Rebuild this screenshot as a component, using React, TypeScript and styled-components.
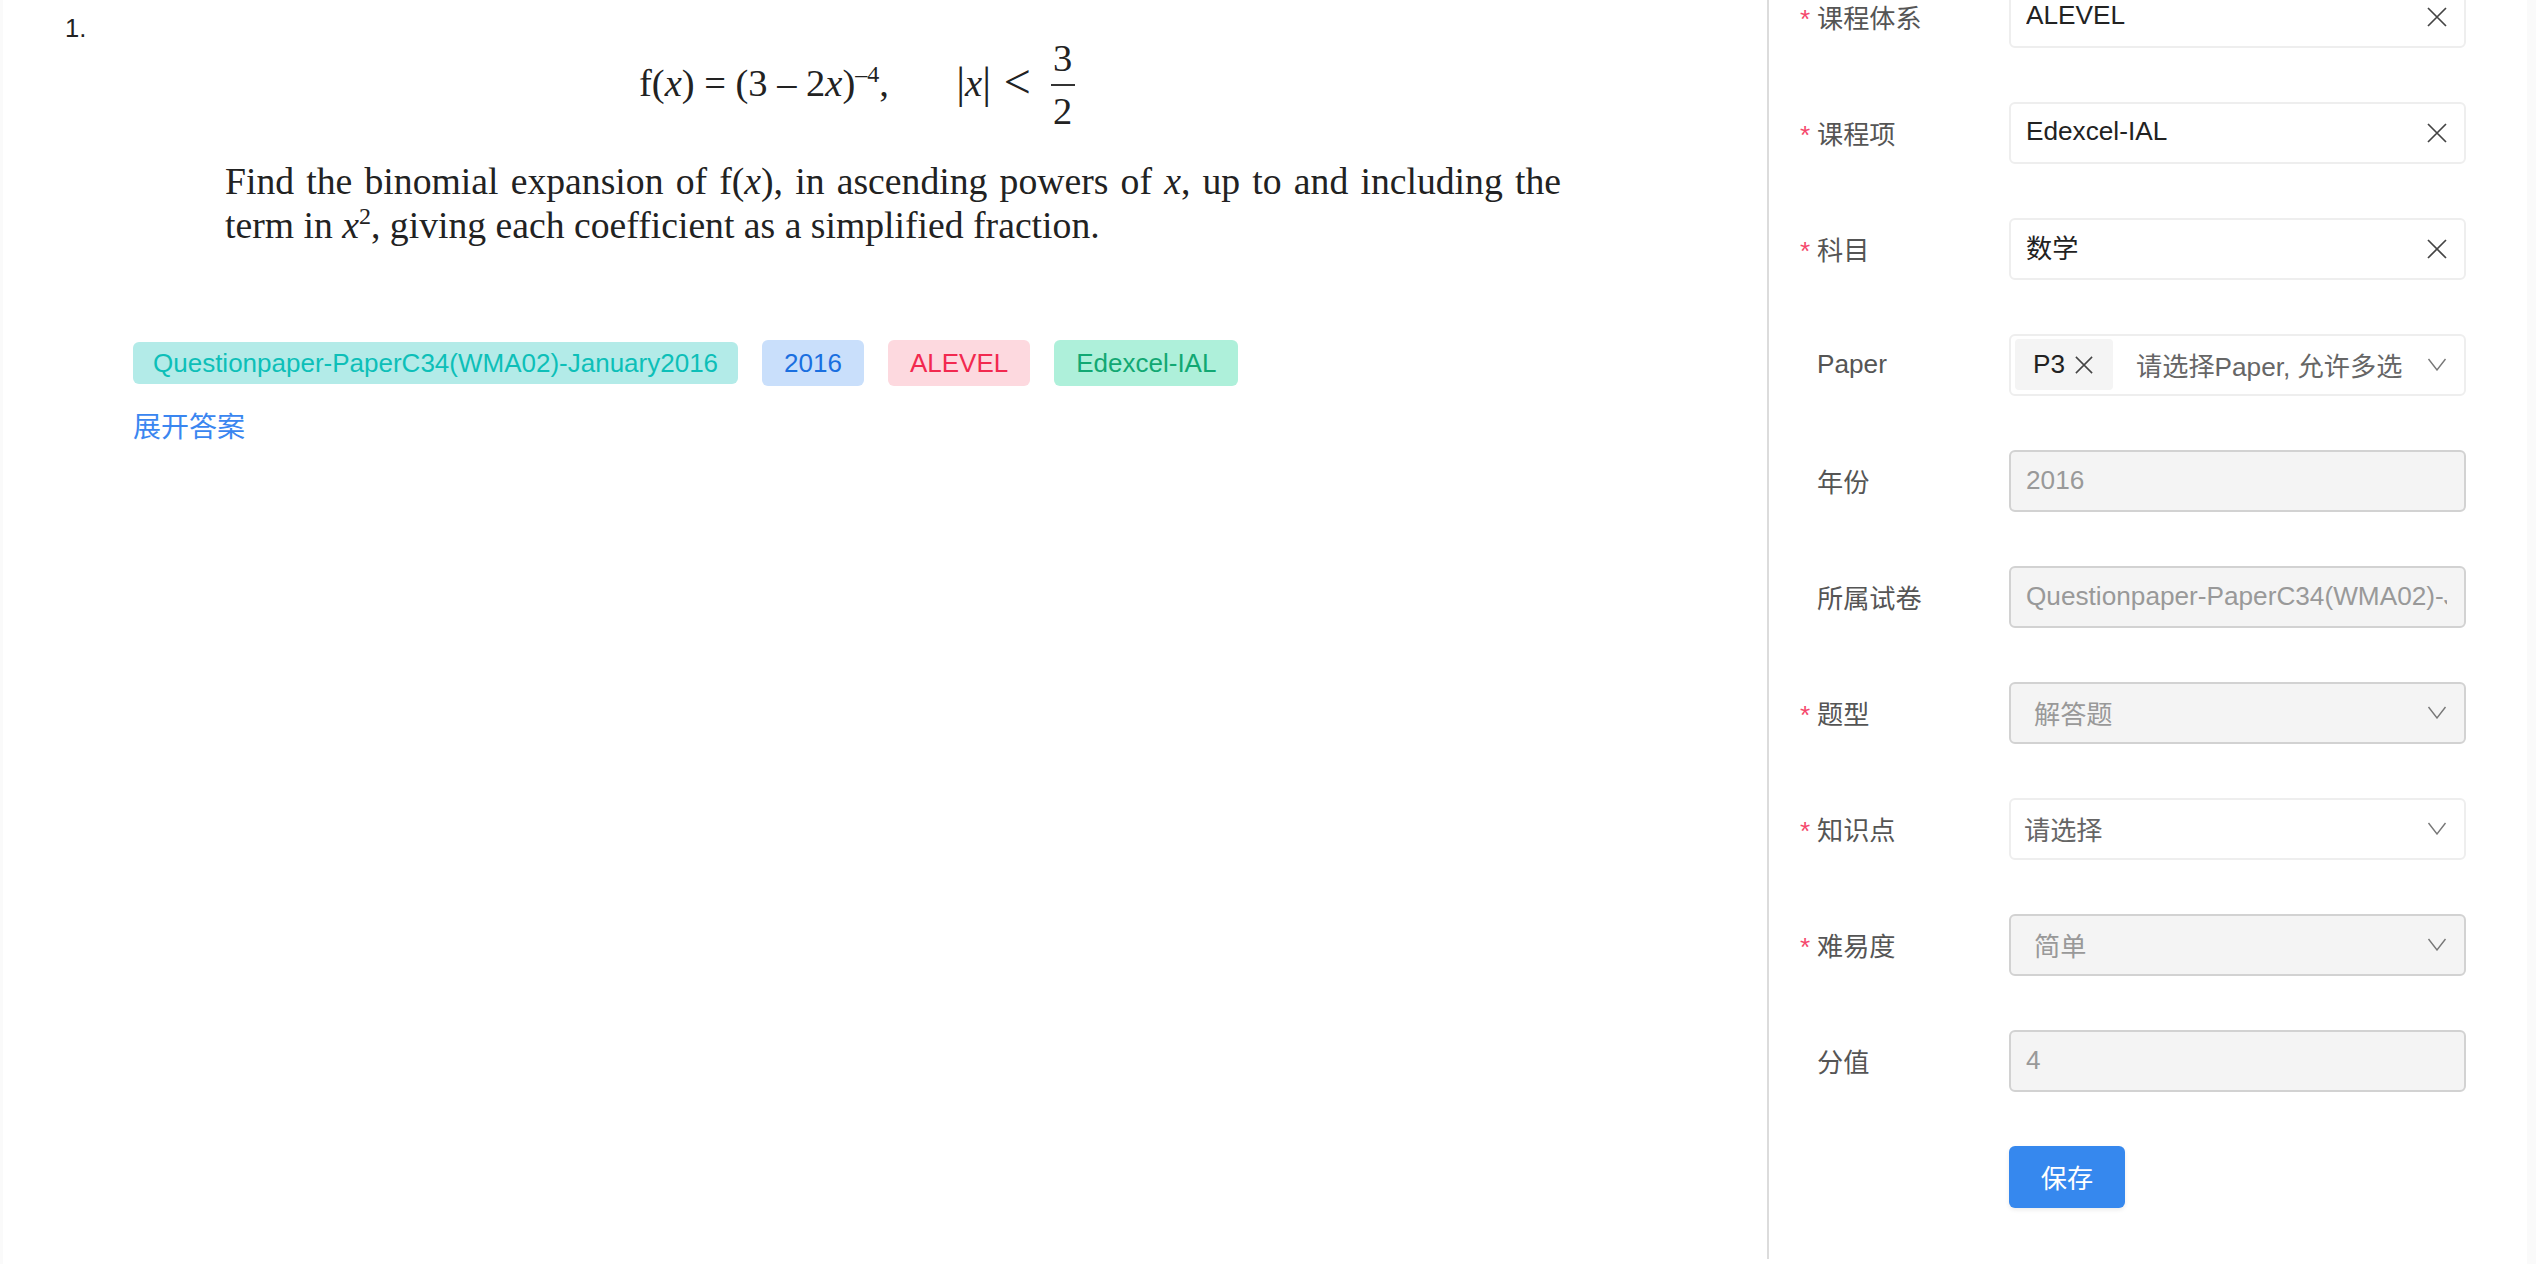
import styled, { createGlobalStyle } from 'styled-components'

const GlobalStyle = createGlobalStyle`
  html, body {
    margin: 0;
    padding: 0;
    height: 100%;
    overflow: hidden;
    background: #fff;
  }
  body {
    font-family: "Liberation Sans", "Noto Sans CJK SC", sans-serif;
    font-size: 26.2px;
    color: #333;
  }
`

const Page = styled.div`
  display: flex;
  height: 1264px;
  overflow: hidden;
  border-left: 3px solid #fafafa;
  box-sizing: border-box;
`

const Main = styled.main`
  width: 1766px;
  flex: none;
  box-sizing: border-box;
  padding: 13px 0 0 61px;
  border-right: 2px solid #dcdcdc;
  margin-bottom: 5px;
`

const Number = styled.div`
  color: #222;
  font-size: 25.6px;
  line-height: 30px;
  margin-left: 1px;
`

const Formula = styled.div`
  display: flex;
  align-items: center;
  margin: -5px 0 0 575px;
  height: 90px;
  font-family: "Liberation Serif", "Times New Roman", serif;
  font-size: 38.5px;
  color: #222;
  white-space: pre;
`

const Sup = styled.sup`
  font-size: 24px;
  line-height: 0;
`

const MathSign = styled.span<{ $size: number }>`
  font-size: ${p => p.$size}px;
  line-height: 0;
  vertical-align: -2px;
`

const LessSign = styled(MathSign)`
  margin-left: 3px;
`

const Fraction = styled.span`
  display: inline-flex;
  flex-direction: column;
  align-items: center;
  gap: 3px;
  margin-left: 20px;
  padding-top: 3px;
  line-height: 45px;
`

const FractionBar = styled.span`
  width: 24px;
  height: 2px;
  background: #333;
`

const Question = styled.p`
  width: 1336px;
  margin: 32px 0 0 161px;
  font-family: "Liberation Serif", "Times New Roman", serif;
  font-size: 37.7px;
  line-height: 43.5px;
  color: #222;
  text-align: justify;
`

const TagRow = styled.div`
  display: flex;
  align-items: center;
  gap: 24px;
  margin: 93px 0 0 69px;
`

const TAG_COLORS = {
  teal: { bg: '#b3ebe8', fg: '#0dbfb8' },
  blue: { bg: '#c9dffb', fg: '#1a6fe0' },
  red: { bg: '#fdd9df', fg: '#f2294f' },
  green: { bg: '#aef0da', fg: '#12a873' },
}

const Tag = styled.span<{ $tone: keyof typeof TAG_COLORS; $short?: boolean }>`
  display: block;
  height: ${p => (p.$short ? 42 : 46)}px;
  line-height: ${p => (p.$short ? 42 : 46)}px;
  padding: 0 ${p => (p.$short ? 20 : 22)}px;
  border-radius: 6px;
  font-size: 26px;
  background: ${p => TAG_COLORS[p.$tone].bg};
  color: ${p => TAG_COLORS[p.$tone].fg};
`

const ExpandLink = styled.a`
  display: block;
  margin: 23px 0 0 69px;
  font-size: 28px;
  line-height: 38px;
  color: #3a86f0;
`

const Side = styled.aside`
  flex: 1;
  display: flex;
  flex-direction: column;
  gap: 53px;
  margin-top: -15px;
  padding-left: 31px;
  background: linear-gradient(to left, #fafafa 9px, #fff 9px);
`

const Row = styled.div`
  display: flex;
  align-items: center;
  height: 63px;
`

const Label = styled.label<{ $required?: boolean }>`
  position: relative;
  width: 209px;
  padding-left: 17px;
  box-sizing: border-box;
  flex: none;
  color: #555;

  &::before {
    content: ${p => (p.$required ? '"*"' : 'none')};
    position: absolute;
    left: 0;
    top: 6px;
    color: #f5486c;
  }
`

const Field = styled.div<{ $disabled?: boolean }>`
  width: 457px;
  height: 62px;
  box-sizing: border-box;
  display: flex;
  align-items: center;
  gap: 12px;
  padding: 0 17px 0 15px;
  border: 2px solid ${p => (p.$disabled ? '#d2d2d2' : '#eeeeee')};
  border-radius: 6px;
  background: ${p => (p.$disabled ? '#f4f4f4' : '#fff')};
  color: ${p => (p.$disabled ? '#999' : '#222')};
`

const FieldText = styled.span<{ $shift?: number; $muted?: boolean; $raised?: boolean; $clip?: number }>`
  flex: 1;
  min-width: 0;
  overflow: hidden;
  white-space: nowrap;
  margin-left: ${p => p.$shift ?? 0}px;
  margin-right: ${p => p.$clip ?? 0}px;
  padding-bottom: ${p => (p.$raised ? 3 : 0)}px;
  color: ${p => (p.$muted ? '#666' : 'inherit')};
`

const Chip = styled.span`
  flex: none;
  display: flex;
  align-items: center;
  gap: 10px;
  height: 51px;
  margin: 0 11px 0 -11px;
  padding: 0 20px 0 18px;
  border-radius: 4px;
  background: #f4f4f4;
  color: #222;
`

const CrossSvg = styled.svg`
  flex: none;
  fill: none;
  stroke: #444;
  stroke-width: 1.7;
`

const ChevronSvg = styled.svg`
  flex: none;
  fill: none;
  stroke: #777;
  stroke-width: 1.4;
`

const CloseIcon = ({ size = 20 }: { size?: number }) => (
  <CrossSvg width={size} height={size} viewBox="0 0 20 20">
    <path d="M1 1 19 19M19 1 1 19" />
  </CrossSvg>
)

const ChevronIcon = () => (
  <ChevronSvg width="20" height="13" viewBox="0 0 20 13">
    <path d="M1.5 1 10 12 18.5 1" />
  </ChevronSvg>
)

const SaveButton = styled.button`
  width: 116px;
  height: 62px;
  border: none;
  border-radius: 6px;
  background: #3688ee;
  color: #fff;
  font: inherit;
  box-shadow: 0 2px 4px rgba(0, 0, 0, 0.08);
`

const App = () => {
  return (
    <>
      <GlobalStyle />
      <Page>
        <Main>
          <Number>1.</Number>
          <Formula>
            <span>
              f(<i>x</i>) = (3 – 2<i>x</i>)<Sup>–4</Sup>,{'       '}
              <MathSign $size={44}>|</MathSign><i>x</i><MathSign $size={44}>|</MathSign> <LessSign $size={48}>{'<'}</LessSign>
            </span>
            <Fraction>
              <span>3</span>
              <FractionBar />
              <span>2</span>
            </Fraction>
          </Formula>
          <Question>
            Find the binomial expansion of f(<i>x</i>), in ascending powers of <i>x</i>, up to and including the
            term in <i>x</i>
            <Sup>2</Sup>, giving each coefficient as a simplified fraction.
          </Question>
          <TagRow>
            <Tag $tone="teal" $short>Questionpaper-PaperC34(WMA02)-January2016</Tag>
            <Tag $tone="blue">2016</Tag>
            <Tag $tone="red">ALEVEL</Tag>
            <Tag $tone="green">Edexcel-IAL</Tag>
          </TagRow>
          <ExpandLink>展开答案</ExpandLink>
        </Main>
        <Side>
          <Row>
            <Label $required>课程体系</Label>
            <Field><FieldText $raised>ALEVEL</FieldText><CloseIcon /></Field>
          </Row>
          <Row>
            <Label $required>课程项</Label>
            <Field><FieldText $raised>Edexcel-IAL</FieldText><CloseIcon /></Field>
          </Row>
          <Row>
            <Label $required>科目</Label>
            <Field><FieldText $raised>数学</FieldText><CloseIcon /></Field>
          </Row>
          <Row>
            <Label>Paper</Label>
            <Field>
              <Chip>P3 <CloseIcon size={18} /></Chip>
              <FieldText $muted $clip={6}>请选择Paper, 允许多选</FieldText>
              <ChevronIcon />
            </Field>
          </Row>
          <Row>
            <Label>年份</Label>
            <Field $disabled><FieldText>2016</FieldText></Field>
          </Row>
          <Row>
            <Label>所属试卷</Label>
            <Field $disabled><FieldText>Questionpaper-PaperC34(WMA02)-January2016</FieldText></Field>
          </Row>
          <Row>
            <Label $required>题型</Label>
            <Field $disabled><FieldText $shift={8}>解答题</FieldText><ChevronIcon /></Field>
          </Row>
          <Row>
            <Label $required>知识点</Label>
            <Field><FieldText $muted $shift={-2}>请选择</FieldText><ChevronIcon /></Field>
          </Row>
          <Row>
            <Label $required>难易度</Label>
            <Field $disabled><FieldText $shift={8}>简单</FieldText><ChevronIcon /></Field>
          </Row>
          <Row>
            <Label>分值</Label>
            <Field $disabled><FieldText>4</FieldText></Field>
          </Row>
          <Row>
            <Label />
            <SaveButton>保存</SaveButton>
          </Row>
        </Side>
      </Page>
    </>
  )
}

export default App
